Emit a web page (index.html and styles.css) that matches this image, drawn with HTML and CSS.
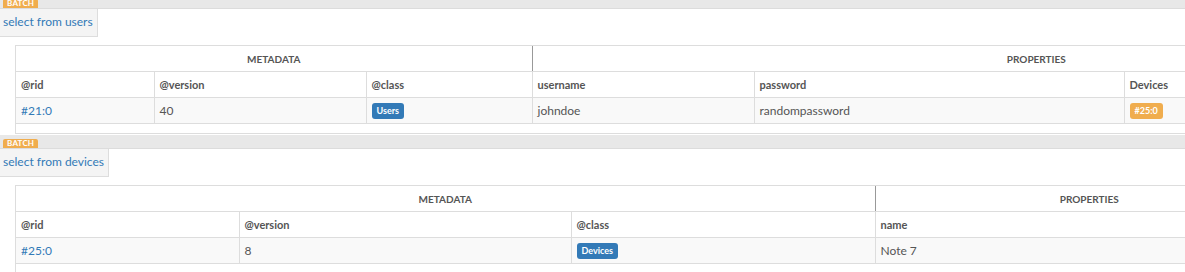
FILE: index.html
```
<!DOCTYPE html>
<html lang="en">

<head>
    <meta charset="UTF-8">
    <meta name="viewport" content="width=device-width, initial-scale=1.0">
    <title>Batch results</title>
    <link rel="stylesheet" href="styles.css">
</head>

<body>
    <div class="batch first">
        <div class="batchbar">
            <span class="batchlabel">BATCH</span>
        </div>
        <div class="query">select from users</div>
        <div class="resultwrap">
            <table class="result users">
                <colgroup>
                    <col class="c138">
                    <col class="c212">
                    <col class="c166">
                    <col class="c222">
                    <col class="c370">
                    <col class="c416">
                </colgroup>
                <tr class="group">
                    <th colspan="3">METADATA</th>
                    <th colspan="3" class="split">PROPERTIES</th>
                </tr>
                <tr class="heads">
                    <th>@rid</th>
                    <th>@version</th>
                    <th>@class</th>
                    <th>username</th>
                    <th>password</th>
                    <th>Devices</th>
                </tr>
                <tr class="row">
                    <td><a href="#">#21:0</a></td>
                    <td>40</td>
                    <td><span class="badge blue">Users</span></td>
                    <td>johndoe</td>
                    <td>randompassword</td>
                    <td><span class="badge orange">#25:0</span></td>
                </tr>
            </table>
        </div>
    </div>

    <div class="batch">
        <div class="batchbar">
            <span class="batchlabel">BATCH</span>
        </div>
        <div class="query">select from devices</div>
        <div class="resultwrap">
            <table class="result devices">
                <colgroup>
                    <col class="c223">
                    <col class="c332">
                    <col class="c304">
                    <col class="c428">
                </colgroup>
                <tr class="group">
                    <th colspan="3">METADATA</th>
                    <th class="split">PROPERTIES</th>
                </tr>
                <tr class="heads">
                    <th>@rid</th>
                    <th>@version</th>
                    <th>@class</th>
                    <th>name</th>
                </tr>
                <tr class="row">
                    <td><a href="#">#25:0</a></td>
                    <td>8</td>
                    <td><span class="badge blue">Devices</span></td>
                    <td>Note 7</td>
                </tr>
            </table>
        </div>
    </div>
</body>

</html>
```

FILE: styles.css
```
body {
    font-family: Lato, "Open Sans", sans-serif;
    margin: 0;
    overflow: hidden;
    background: #fff;
    color: #555;
}

.batch.first {
    margin-top: -5px;
}

.batchbar {
    height: 13px;
    background: #e8e8e8;
    border-bottom: 1px solid #dcdcdc;
    display: flex;
    align-items: flex-end;
    padding-left: 3px;
}

.batchlabel {
    background: #f0ad4e;
    color: #fff;
    font-size: 8px;
    font-weight: bold;
    line-height: 9px;
    padding: 0 4px;
    border-radius: 2px 2px 0 0;
    letter-spacing: 0.2px;
}

.query {
    display: inline-block;
    box-sizing: border-box;
    height: 28px;
    line-height: 26px;
    padding: 0 4px 0 3px;
    font-size: 12px;
    color: #337ab7;
    background: #f4f4f4;
    border-right: 1px solid #ddd;
    border-bottom: 1px solid #ddd;
    vertical-align: top;
}

.resultwrap {
    margin: 8px 0 1px 15px;
    border: 1px solid #ddd;
    border-right: none;
    padding-bottom: 9px;
    overflow: hidden;
}

.result {
    border-collapse: collapse;
    table-layout: fixed;
    font-size: 12px;
}

.users {
    width: 1524px;
}

.devices {
    width: 1287px;
}

.c138 { width: 138px; }
.c212 { width: 212px; }
.c166 { width: 166px; }
.c222 { width: 222px; }
.c370 { width: 370px; }
.c416 { width: 416px; }
.c223 { width: 223px; }
.c332 { width: 332px; }
.c304 { width: 304px; }
.c428 { width: 428px; }

.result th,
.result td {
    text-align: left;
    padding: 0 5px;
    height: 25px;
    border-bottom: 1px solid #ddd;
    white-space: nowrap;
    overflow: hidden;
}

.group th {
    text-align: center;
    font-size: 10px;
    font-weight: bold;
    color: #555;
}

.group th.split {
    border-left: 1px solid #999;
}

.heads th {
    font-size: 11px;
    font-weight: bold;
    color: #555;
    border-left: 1px solid #ddd;
}

.row td {
    background: #f9f9f9;
    border-left: 1px solid #ddd;
}

.heads th:first-child,
.row td:first-child {
    border-left: none;
}

.row a {
    color: #337ab7;
    text-decoration: none;
}

.badge {
    display: inline-block;
    color: #fff;
    font-size: 9px;
    font-weight: bold;
    line-height: 16px;
    padding: 0 5px;
    border-radius: 3px;
    vertical-align: middle;
}

.blue {
    background: #337ab7;
}

.orange {
    background: #f0ad4e;
}
```
